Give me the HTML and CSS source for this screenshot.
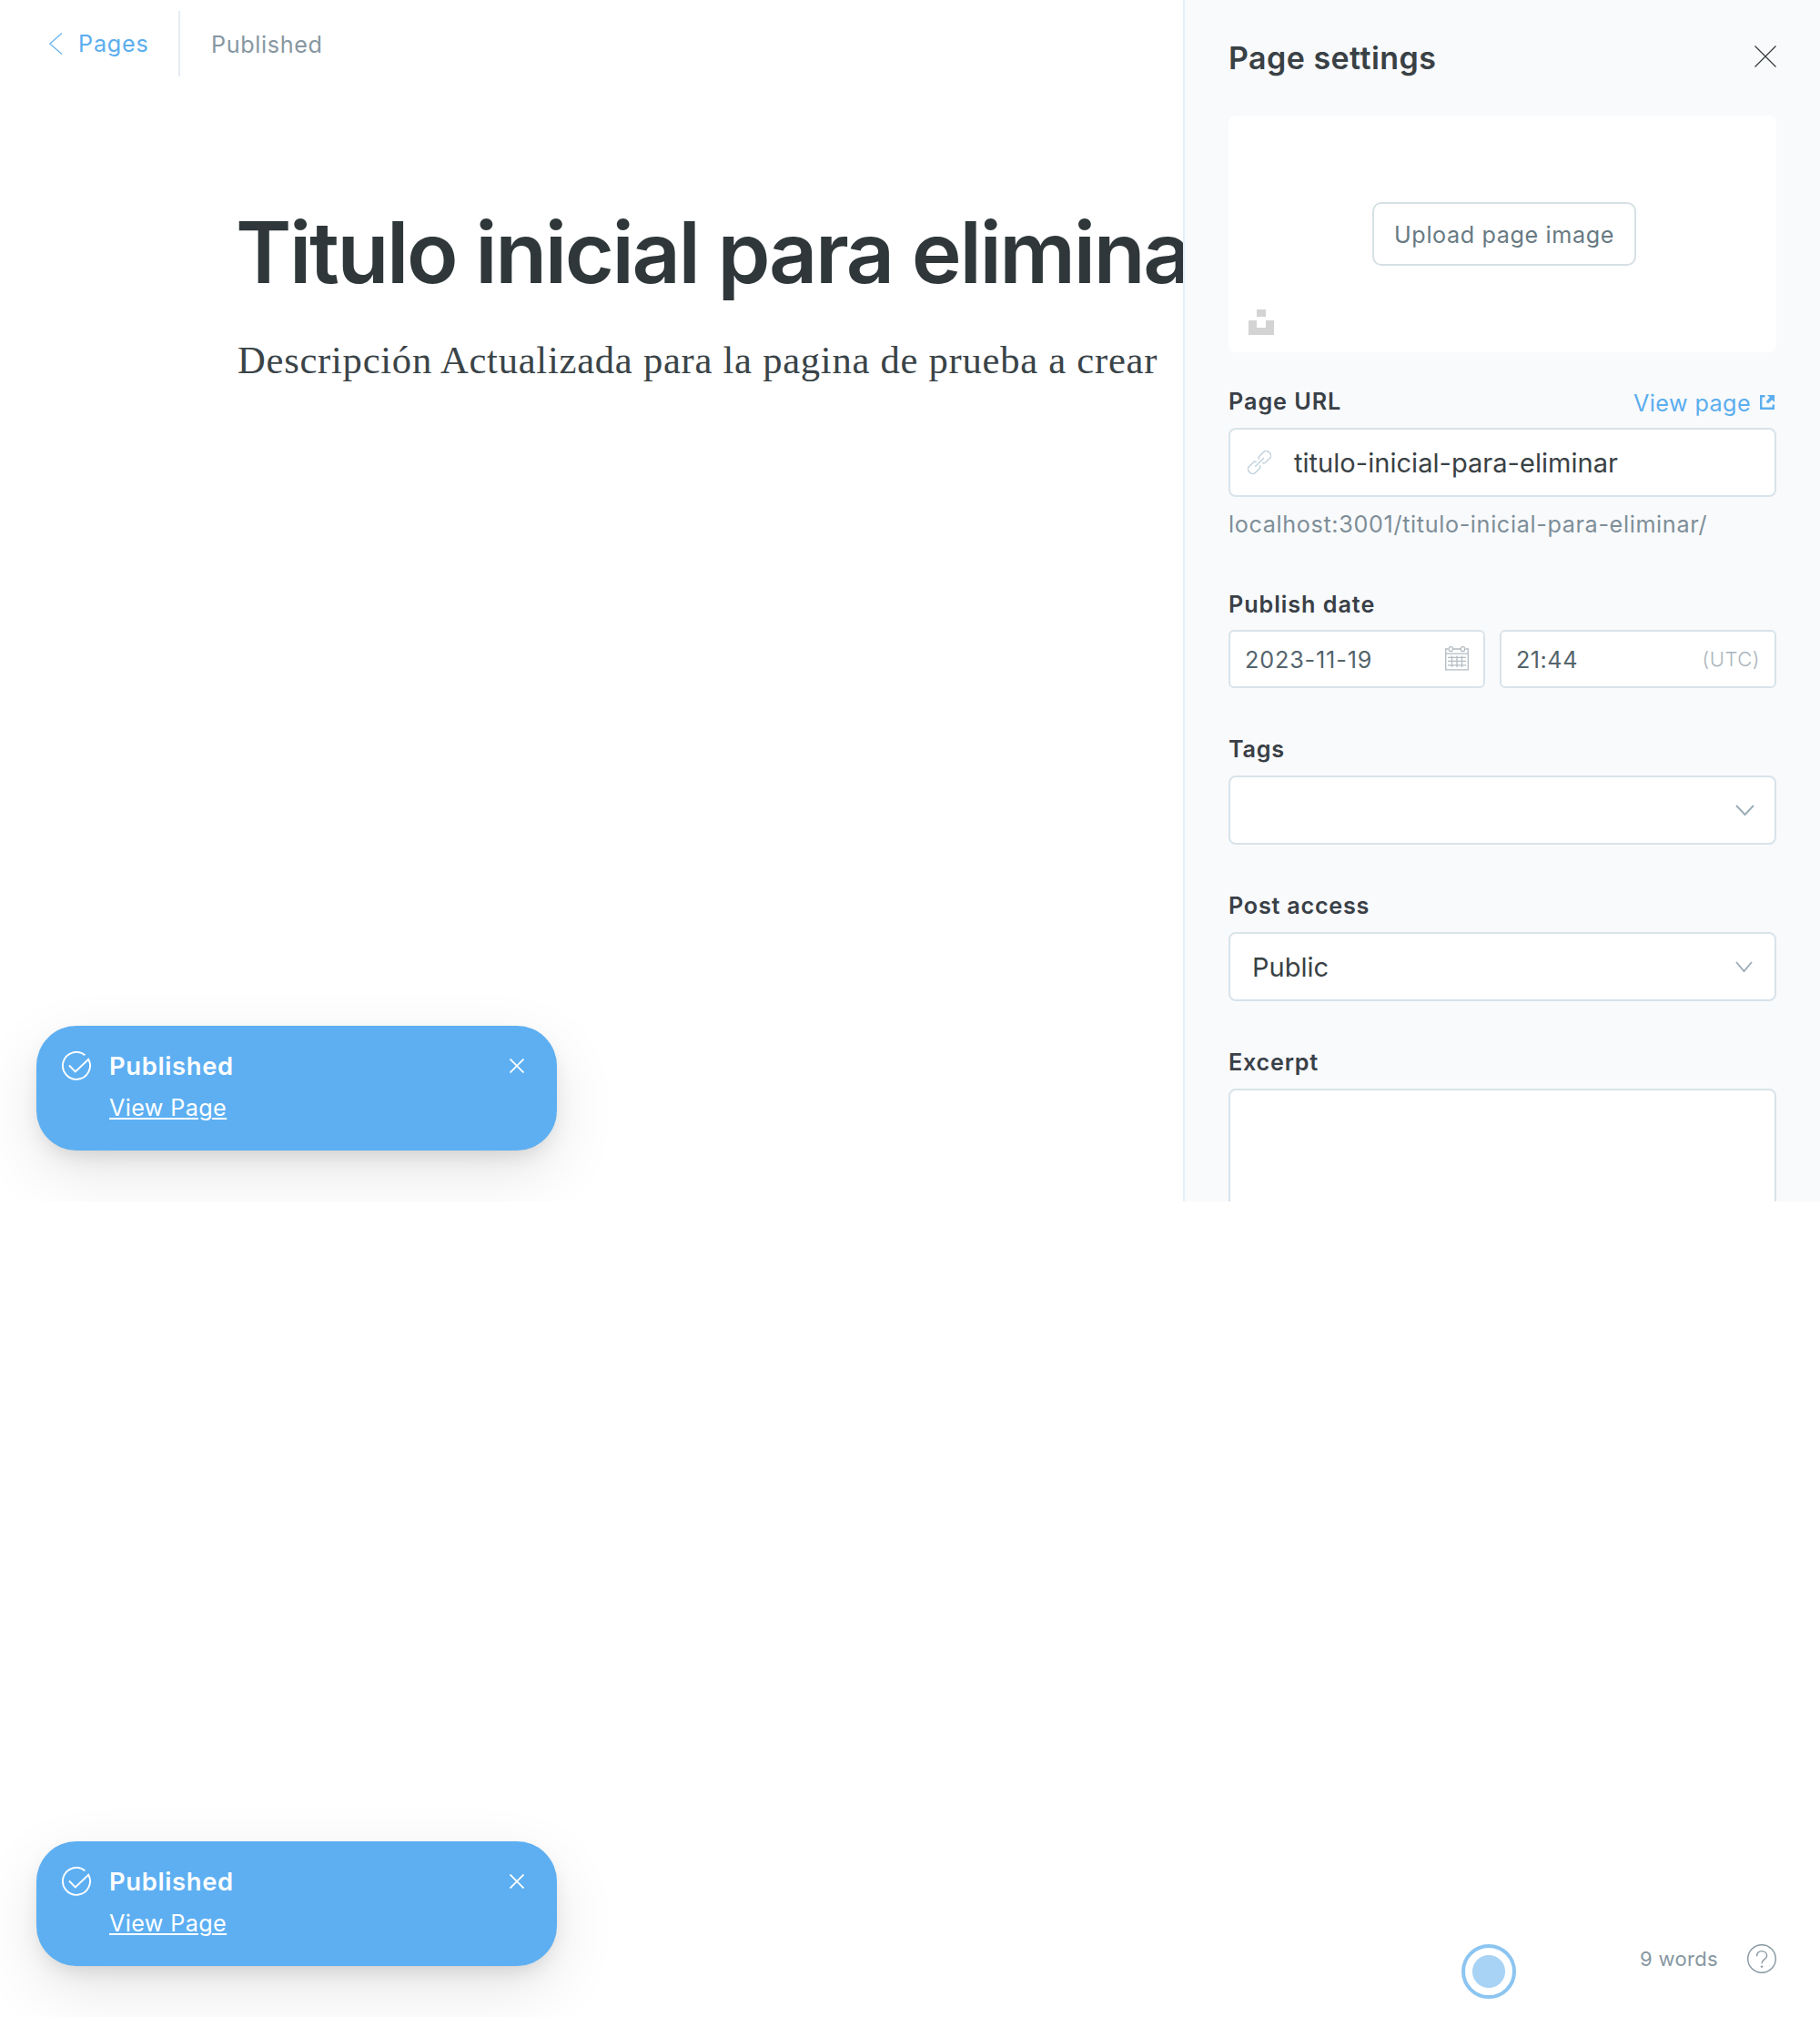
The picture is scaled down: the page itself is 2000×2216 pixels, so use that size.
FILE: index.html
```html
<!DOCTYPE html>
<html lang="es">
<head>
<meta charset="utf-8">
<title>Page settings</title>
<link rel="stylesheet" href="styles.css">
</head>
<body>
<section class="screen screen-editor">
  <main class="editor">
    <header class="topbar">
      <a class="back">
        <svg class="back-icon" width="14" height="24" viewBox="0 0 14 24"><path d="M14 0.5 0.8 12 14 23.5"/></svg>
        <span>Pages</span>
      </a>
      <span class="status">Published</span>
    </header>
    <article class="post">
      <h1 class="post-title">Titulo inicial para eliminar</h1>
      <p class="post-body">Descripción Actualizada para la pagina de prueba a crear</p>
    </article>
  </main>

  <aside class="settings">
    <header class="settings-head">
      <h2 class="settings-title">Page settings</h2>
      <svg class="settings-close" width="24" height="24" viewBox="0 0 24 24"><path d="M0.5 0.5 23.5 23.5M23.5 0.5 0.5 23.5"/></svg>
    </header>

    <div class="cover">
      <button class="upload">Upload page image</button>
      <svg class="cover-icon" width="28" height="28" viewBox="0 0 28 28"><path d="M9 0H19V8H9ZM0 12H9V20H19V12H28V28H0Z"/></svg>
    </div>

    <div class="field field-url">
      <div class="label-row">
        <span class="label label-url">Page URL</span>
        <a class="view-link">
          <span>View page</span>
          <svg width="16" height="16" viewBox="0 0 16 16"><path class="ext-box" d="M5.5 1.2H1.2V14.8H14.8V10.5"/><path class="ext-arrow" d="M8 0H16V8L13.2 5.2 9 9.6 6.6 7.2 10.9 2.8Z"/></svg>
        </a>
      </div>
      <div class="input input-url">
        <svg width="26" height="26" viewBox="0 0 26 26"><g transform="translate(13 13) rotate(-45)"><path d="M2 -2.6C2.3 -4 3.4 -4.8 5 -4.8H11.5C14 -4.8 15.2 -3.4 15.2 -1.2V1.2C15.2 3.4 14 4.8 11.5 4.8H5C3.4 4.8 2.3 4 2 2.6"/><path d="M-2 -2.6C-2.3 -4 -3.4 -4.8 -5 -4.8H-11.5C-14 -4.8 -15.2 -3.4 -15.2 -1.2V1.2C-15.2 3.4 -14 4.8 -11.5 4.8H-5C-3.4 4.8 -2.3 4 -2 2.6"/><path d="M-6.8 0H6.8"/></g></svg>
        <span>titulo-inicial-para-eliminar</span>
      </div>
      <p class="help">localhost:3001/titulo-inicial-para-eliminar/</p>
    </div>

    <div class="field field-date">
      <span class="label label-date">Publish date</span>
      <div class="date-row">
        <div class="input-small input-date">
          <span class="date-value">2023-11-19</span>
          <svg width="26" height="27" viewBox="0 0 26 27"><path d="M3.5 3H0.7V25.8H25.3V3H22.5M9 3H17M0.7 8.2H25.3"/><rect x="4.2" y="0.7" width="4.2" height="4.8" rx="1.6"/><rect x="17.4" y="0.7" width="4.2" height="4.8" rx="1.6"/><path d="M7.5 10.5V23M13 10.5V23M18.5 10.5V23M3 12.3H23M3 16.4H23M3 20.8H23"/></svg>
        </div>
        <div class="input-small input-time">
          <span class="time-value">21:44</span>
          <span class="utc">(UTC)</span>
        </div>
      </div>
    </div>

    <div class="field">
      <span class="label">Tags</span>
      <div class="input input-tags">
        <svg width="21" height="13" viewBox="0 0 21 13"><path d="M1 1 10.5 11 20 1"/></svg>
      </div>
    </div>

    <div class="field">
      <span class="label">Post access</span>
      <div class="input input-access">
        <span>Public</span>
        <svg width="19" height="13" viewBox="0 0 19 13"><path d="M1 1 9.5 11 18 1"/></svg>
      </div>
    </div>

    <div class="field">
      <span class="label">Excerpt</span>
      <div class="input excerpt"></div>
    </div>
  </aside>

  <div class="toast">
    <svg class="toast-check" width="32" height="32" viewBox="0 0 32 32"><path d="M25.4 4.2A15 15 0 1 0 29.2 8.8L14.8 22.5 8 15.5"/></svg>
    <div class="toast-text">
      <strong class="toast-title">Published</strong>
      <a class="toast-link">View Page</a>
    </div>
    <svg class="toast-close" width="16" height="16" viewBox="0 0 16 16"><path d="M0.5 0.5 15.5 15.5M15.5 0.5 0.5 15.5"/></svg>
  </div>
</section>

<section class="screen screen-footer">
  <div class="pointer"></div>
  <span class="words">9 words</span>
  <svg class="help-icon" width="32" height="32" viewBox="0 0 32 32"><circle cx="16" cy="16" r="15.3"/><path d="M10.6 13.2C10.6 9.6 12.8 7.6 16 7.6S21.6 9.8 21.6 12.8C21.6 17 16 16.4 16 21.2"/><circle class="dot" cx="16" cy="24.6" r="1.2"/></svg>

  <div class="toast">
    <svg class="toast-check" width="32" height="32" viewBox="0 0 32 32"><path d="M25.4 4.2A15 15 0 1 0 29.2 8.8L14.8 22.5 8 15.5"/></svg>
    <div class="toast-text">
      <strong class="toast-title">Published</strong>
      <a class="toast-link">View Page</a>
    </div>
    <svg class="toast-close" width="16" height="16" viewBox="0 0 16 16"><path d="M0.5 0.5 15.5 15.5M15.5 0.5 0.5 15.5"/></svg>
  </div>
</section>
</body>
</html>
```
FILE: styles.css
```css
* { box-sizing: border-box; }

body {
  margin: 0;
  background: #fff;
  color: #394047;
  font: 400 25.2px/36px Inter, "Liberation Sans", sans-serif;
}

h1, h2, p { margin: 0; }

svg {
  display: block;
  flex: none;
  fill: none;
  stroke: currentColor;
}

.screen {
  position: relative;
  width: 2000px;
  overflow: hidden;
}

.screen-editor { display: flex; height: 1320px; }

/* Editor */
.editor {
  width: 1300px;
  overflow: hidden;
}

.topbar {
  display: flex;
  height: 72px;
  margin-top: 12px;
}

.back {
  display: flex;
  align-items: center;
  gap: 18px;
  width: 198px;
  padding-left: 54px;
  border-right: 2px solid #e5ecf2;
  color: #5caeee;
  letter-spacing: 0.81px;
}

.back-icon { stroke-width: 1.2; }

.status {
  padding: 19px 0 0 34px;
  color: #8797a1;
  letter-spacing: 0.64px;
}

.post { padding: 133px 0 0 259px; white-space: nowrap; }

.post-title {
  color: #2f373a;
  font-size: 93px;
  font-weight: 600;
  line-height: 120px;
  letter-spacing: -2.38px;
}

.post-body {
  padding: 29px 0 0 2px;
  color: #3a4448;
  font: 400 42.6px/60px "Liberation Serif", serif;
  letter-spacing: 0.74px;
}

/* Settings panel */
.settings {
  width: 700px;
  height: 1320px;
  padding: 0 48px;
  border-left: 2px solid #e5eff5;
  background: #f9fafc;
  overflow: hidden;
}

.settings-head {
  display: flex;
  justify-content: space-between;
  height: 127px;
}

.settings-title {
  padding-top: 44px;
  font-size: 34px;
  font-weight: 600;
  line-height: 40px;
  letter-spacing: 0.46px;
  color: #394145;
}

.settings-close { margin-top: 50px; stroke: #33393c; stroke-width: 1.15; }

.cover {
  position: relative;
  display: flex;
  align-items: center;
  justify-content: center;
  height: 260px;
  padding-left: 4px;
  border-radius: 8px;
  background: #fff;
}

.upload {
  width: 290px;
  height: 70px;
  padding: 2px 0 0;
  border: 2px solid #d6e0e4;
  border-radius: 10px;
  background: #fff;
  color: #687a83;
  font: inherit;
  letter-spacing: 0.6px;
}

.cover-icon {
  position: absolute;
  left: 22px;
  bottom: 19px;
  fill: #d3d3d3;
  stroke: none;
}

.field { margin-top: 49px; }
.field-url { margin-top: 36px; }
.field-date { margin-top: 52px; }

.label-row { display: flex; justify-content: space-between; }

.label {
  display: block;
  font-weight: 600;
  letter-spacing: 0.76px;
}

.label-url { letter-spacing: 0.95px; }
.label-date { letter-spacing: 0.95px; }

.view-link {
  display: flex;
  align-items: center;
  gap: 10px;
  height: 40px;
  margin-bottom: -4px;
  padding-right: 2px;
  color: #5caeee;
  letter-spacing: 0.4px;
}

.view-link svg { margin-top: -2px; }
.ext-box { stroke-width: 2.4; }
.ext-arrow { fill: currentColor; stroke: none; }

.input {
  display: flex;
  align-items: center;
  height: 76px;
  margin-top: 11px;
  border: 2px solid #d8e3ea;
  border-radius: 8px;
  background: #fff;
  color: #394145;
  font-size: 29px;
}

.input-url { gap: 25px; padding-left: 19px; padding-top: 1px; letter-spacing: 0.04px; }
.input-url svg { color: #bfd1de; stroke-width: 1.4; margin-top: -1px; }

.help {
  margin-top: 12px;
  color: #7d8e98;
  letter-spacing: 0.64px;
  white-space: nowrap;
}

.date-row {
  display: grid;
  grid-template-columns: 282px 304px;
  gap: 16px;
  margin-top: 10px;
}

.input-small {
  display: flex;
  align-items: center;
  justify-content: space-between;
  height: 64px;
  padding: 2px 16px 0;
  border: 2px solid #d8e3ea;
  border-radius: 6px;
  background: #fff;
  color: #54646c;
}

.date-value { letter-spacing: 0.85px; }
.time-value { letter-spacing: 0.5px; }
.input-date svg { color: #b3bcc3; stroke-width: 1.3; margin-top: -3px; }

.utc {
  margin-top: -2px;
  color: #aab4bc;
  font-size: 22px;
  font-weight: 300;
  letter-spacing: 0.52px;
}

.input-tags { justify-content: flex-end; padding-right: 22px; }
.input-access { justify-content: space-between; padding: 1px 24px 0 24px; }
.input-tags svg, .input-access svg { color: #9badb9; stroke-width: 1.9; }
.excerpt { height: 200px; }

/* Notification */
.toast {
  position: absolute;
  left: 40px;
  bottom: 56px;
  display: flex;
  align-items: flex-start;
  width: 572px;
  height: 137px;
  padding: 28px 36px 0 28px;
  border-radius: 44px;
  background: #5daff2;
  color: #fff;
  box-shadow: 0 0 2px rgba(0, 0, 0, 0.03), 0 10px 24px -8px rgba(0, 0, 0, 0.15), 0 24px 68px rgba(0, 0, 0, 0.1);
}

.toast-check { stroke-width: 1.9; }

.toast-text {
  display: flex;
  flex: 1;
  flex-direction: column;
  align-items: flex-start;
  padding-left: 20px;
}

.toast-title {
  margin-top: -2px;
  font-size: 27.4px;
  font-weight: 600;
  letter-spacing: 0.65px;
}

.toast-link {
  margin-top: 10px;
  letter-spacing: 0.38px;
  text-decoration: underline;
  text-decoration-thickness: 2px;
  text-underline-offset: 2px;
}

.toast-close { margin-top: 8px; stroke-width: 1.8; }

/* Footer */
.screen-footer {
  display: flex;
  align-items: flex-end;
  justify-content: flex-end;
  height: 896px;
  padding: 0 48px 48px 0;
}

.words {
  margin: 0 32px -1px 136px;
  color: #8797a1;
  font-size: 22px;
  line-height: 34px;
  letter-spacing: 0.33px;
}

.help-icon { color: #8797a1; stroke-width: 1.4; }
.help-icon .dot { fill: currentColor; stroke: none; }

.pointer {
  width: 60px;
  height: 60px;
  margin-bottom: -28px;
  border: 4px solid #8cc5f1;
  border-radius: 50%;
  background: radial-gradient(circle, #a8d3f5 17.5px, #fff 18.5px);
}
```
